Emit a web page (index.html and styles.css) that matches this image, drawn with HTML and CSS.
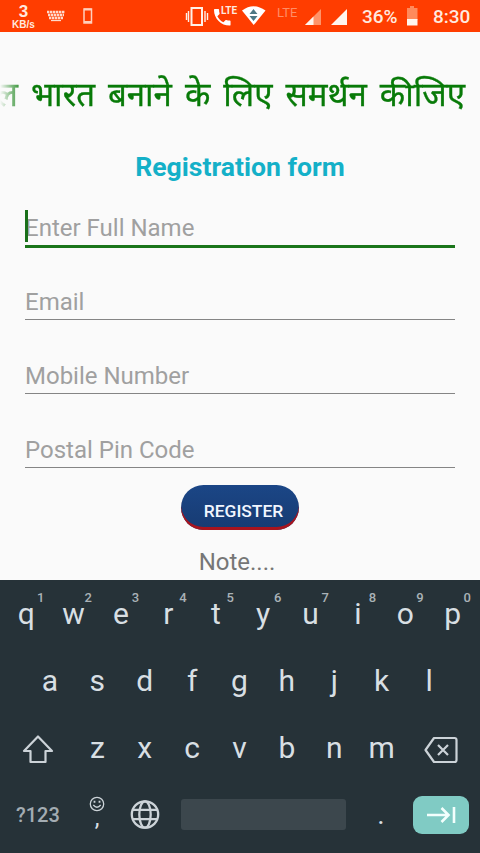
FILE: index.html
```html
<!DOCTYPE html>
<html lang="en">
<head>
<meta charset="utf-8">
<title>Registration form</title>
<link rel="stylesheet" href="styles.css">
</head>
<body>
<header class="status">
  <div class="speed"><b>3</b><span>KB/s</span></div>
  <svg class="icons-left" width="50" height="32" viewBox="46 0 50 32" fill="none">
    <path d="M47 12h18M48 15h16M49 18h14" stroke="#ffd9cb" stroke-width="2.400" stroke-dasharray="2.400 .6"/>
    <path d="M51 20.500h10" stroke="#ffd9cb" stroke-width="1.300"/>
    <path d="M84 9h7.500v14H84z" stroke="#ffd0bd" stroke-width="1.500"/>
    <path d="M84 9.500h7.500M84 22h7.500" stroke="#ffd0bd" stroke-width="2.200"/>
  </svg>
  <svg class="icons-call" width="34" height="32" viewBox="186 0 34 32" fill="none">
    <path d="M191.500 8h10.500v17h-10.500z" stroke="#fff0e8" stroke-width="2"/>
    <path d="M188.500 11v11M186.500 13v7M205 11v11M207.500 13v7" stroke="#fff0e8" stroke-width="1.400"/>
    <path transform="translate(214 9) scale(.92)" d="M3.620 7.790c1.440 2.830 3.760 5.140 6.590 6.590l2.200-2.200c.27-.27.67-.36 1.020-.24 1.120.37 2.330.57 3.570.57.550 0 1 .45 1 1V17c0 .55-.45 1-1 1C7.610 18 0 10.390 0 1c0-.55.45-1 1-1h3.500c.55 0 1 .45 1 1 0 1.250.2 2.450.57 3.570.11.350.03.74-.25 1.020z" fill="#fff"/>
  </svg>
  <span class="lte">LTE</span>
  <svg class="icons-wifi" width="24" height="32" viewBox="242 0 24 32">
    <path d="M242 10.500Q253.500 2 265.500 10.500L253.700 25z" fill="#fff"/>
    <path d="M249.500 14l4-5 4 5zM249.500 16l4 5 4-5z" fill="#4d7885"/>
  </svg>
  <span class="lte dim">LTE</span>
  <svg class="icons-signal" width="44" height="32" viewBox="304 0 44 32">
    <path d="M321 9v16h-16z" fill="#ff9469"/><path d="M313.500 16.500V25H305z" fill="#fff5ee"/>
    <path d="M347 9v16h-16z" fill="#fff5ee"/>
  </svg>
  <span class="battery-text">36%</span>
  <svg class="icons-battery" width="12" height="32" viewBox="406 0 12 32">
    <path d="M410 6h4v2h3.500v12H407V8h3z" fill="#ff8a5c"/><path d="M407 19h10.500v6.500H407z" fill="#fff5ee"/>
  </svg>
  <span class="clock">8:30</span>
</header>
<main class="form">
  <div class="marquee" lang="hi"><span>ल भारत बनाने के लिए समर्थन कीजिए</span></div>
  <h1>Registration form</h1>
  <div class="field active">Enter Full Name</div>
  <div class="field">Email</div>
  <div class="field">Mobile Number</div>
  <div class="field">Postal Pin Code</div>
  <button class="register">REGISTER</button>
  <p class="note">Note....</p>
</main>
<section class="keyboard">
  <div class="row">
    <span class="key">q<sup>1</sup></span><span class="key">w<sup>2</sup></span><span class="key">e<sup>3</sup></span><span class="key">r<sup>4</sup></span><span class="key">t<sup>5</sup></span><span class="key">y<sup>6</sup></span><span class="key">u<sup>7</sup></span><span class="key">i<sup>8</sup></span><span class="key">o<sup>9</sup></span><span class="key">p<sup>0</sup></span>
  </div>
  <div class="row">
    <span class="key">a</span><span class="key">s</span><span class="key">d</span><span class="key">f</span><span class="key">g</span><span class="key">h</span><span class="key">j</span><span class="key">k</span><span class="key">l</span>
  </div>
  <div class="row">
    <span class="key wide icon"><svg width="32" height="30" viewBox="0 0 32 30" fill="none" stroke="#ccd3d8" stroke-width="2.200" stroke-linejoin="round"><path d="M16 1.500L30 16H23.500v11h-15V16H2z"/></svg></span>
    <span class="key">z</span><span class="key">x</span><span class="key">c</span><span class="key">v</span><span class="key">b</span><span class="key">n</span><span class="key">m</span>
    <span class="key wide icon"><svg width="34" height="28" viewBox="0 0 34 28" fill="none" stroke="#ccd3d8" stroke-width="2.200" stroke-linejoin="round"><path d="M10 2h20.500q2 0 2 2v20q0 2-2 2H10L1.500 14z"/><path d="M14 9l10 10M24 9L14 19"/></svg></span>
  </div>
  <div class="row">
    <span class="key wide symbols">?123</span>
    <span class="key comma"><svg width="16" height="16" viewBox="0 0 16 16" fill="none" stroke="#ccd3d8" stroke-width="1.300"><circle cx="8" cy="8" r="6.700"/><path d="M4.300 9q3.700 4.500 7.400 0"/><path d="M5.500 4.800v2M10.500 4.800v2" stroke-width="1.800"/></svg><span>,</span></span>
    <span class="key"><svg width="30" height="30" viewBox="0 0 30 30" fill="none" stroke="#ccd3d8" stroke-width="2.300"><circle cx="15" cy="14.500" r="13.200"/><ellipse cx="15" cy="14.500" rx="5.700" ry="13.200"/><path d="M3 9.800h24M3 19.200h24"/></svg></span>
    <span class="space"></span>
    <span class="key dot">.</span>
    <span class="enter"><svg width="30" height="20" viewBox="0 0 30 20" fill="none" stroke="#f2fffd" stroke-width="2.600"><path d="M1 10h21M15.500 3l7 7-7 7M28 2v16"/></svg></span>
  </div>
</section>
</body>
</html>
```
FILE: styles.css
```css
* { box-sizing: border-box; }
body {
  margin: 0;
  width: 480px;
  height: 853px;
  overflow: hidden;
  display: flex;
  flex-direction: column;
  background: #fafafa;
  font-family: Roboto, "Noto Sans", sans-serif;
}
svg { display: block; flex: none; overflow: visible; }

.status {
  height: 32px;
  flex: none;
  display: flex;
  background: #ff3d00;
  color: #ffe9df;
  white-space: nowrap;
}
.speed {
  width: 46px;
  display: flex;
  flex-direction: column;
  align-items: center;
  padding: 4px 0 0 1px;
  font: 700 17px/15px "Liberation Sans", sans-serif;
}
.speed span { font-size: 10px; line-height: 11px; }
.icons-call { margin-left: 90px; }
.lte { width: 22px; padding-left: 1px; font: 700 10px/22px Roboto, sans-serif; }
.lte.dim { width: 38px; padding-left: 11px; color: #ff8d66; font-weight: 400; font-size: 13px; line-height: 25px; }
.battery-text, .clock { font-size: 19px; line-height: 34px; font-weight: 500; }
.battery-text { width: 58px; padding-left: 14px; }
.clock { padding-left: 15px; }

.form {
  height: 548px;
  flex: none;
  display: flex;
  flex-direction: column;
  align-items: center;
}
.marquee {
  width: 480px;
  height: 76px;
  margin-top: 24px;
  padding-right: 15px;
  display: flex;
  justify-content: flex-end;
  color: #087a08;
  font: 33px/76px "Noto Sans", "Noto Sans Devanagari", sans-serif;
  word-spacing: 4.4px;
  -webkit-text-stroke: .35px #087a08;
  white-space: nowrap;
  -webkit-mask-image: linear-gradient(90deg, transparent, #000 24px);
  mask-image: linear-gradient(90deg, transparent, #000 24px);
}
h1 {
  margin: 18px 0 24px;
  color: #14b0c8;
  font: 700 26.6px/34px Roboto, sans-serif;
}
.field {
  width: 430px;
  height: 38px;
  margin-bottom: 35.8px;
  padding-top: 2px;
  color: #a0a0a0;
  font-size: 24px;
  line-height: 37px;
  border-bottom: 1px solid #858585;
  position: relative;
}
.field.active {
  height: 40px;
  margin-bottom: 34px;
  border-bottom: 3px solid #1a751a;
}
.field.active::before {
  content: "";
  position: absolute;
  left: 0;
  top: 2px;
  width: 3px;
  height: 32px;
  background: #1a701a;
}
.register {
  width: 118px;
  height: 45px;
  flex: none;
  margin-top: -18px;
  padding: 7px 0 0 7px;
  border: 0;
  border-radius: 23px;
  background: linear-gradient(#1b4686, #173b72);
  box-shadow: inset 0 -3px 0 #a8141e;
  color: #f1f6ff;
  font: 500 17.4px/24px Roboto, sans-serif;
}
.note { margin: 14.5px 6px 0 0; color: #767676; font-size: 24px; line-height: 34px; }

.keyboard {
  flex: 1;
  padding: 0 3.5px 0 2.5px;
  background: #263238;
  color: #d8dfe3;
}
.row { height: 67px; display: flex; justify-content: center; align-items: center; }
.key {
  width: 47.4px;
  height: 67px;
  flex: none;
  position: relative;
  display: flex;
  justify-content: center;
  align-items: center;
  font-size: 30px;
  line-height: 67px;
}
.key sup {
  position: absolute;
  right: 5.5px;
  top: 10px;
  color: #aab2b7;
  font-size: 13px;
  line-height: 15px;
  font-weight: 500;
}
.wide { width: 71.1px; }
.icon { padding-top: 4px; }
.symbols { padding-top: 2px; color: #a3acb2; font-size: 20px; font-weight: 500; }
.comma { flex-direction: column; justify-content: flex-start; padding-top: 15px; font-size: 24px; }
.comma span { line-height: 13px; }
.dot { padding-bottom: 1px; font-size: 28px; }
.space { width: 165px; height: 31px; flex: none; margin: 0 11.5px 0 12.5px; border-radius: 3px; background: #3c474d; }
.enter {
  width: 56px;
  height: 38px;
  flex: none;
  margin: 0 8px;
  display: flex;
  justify-content: center;
  align-items: center;
  border-radius: 9px;
  background: #80cbc4;
}
```
